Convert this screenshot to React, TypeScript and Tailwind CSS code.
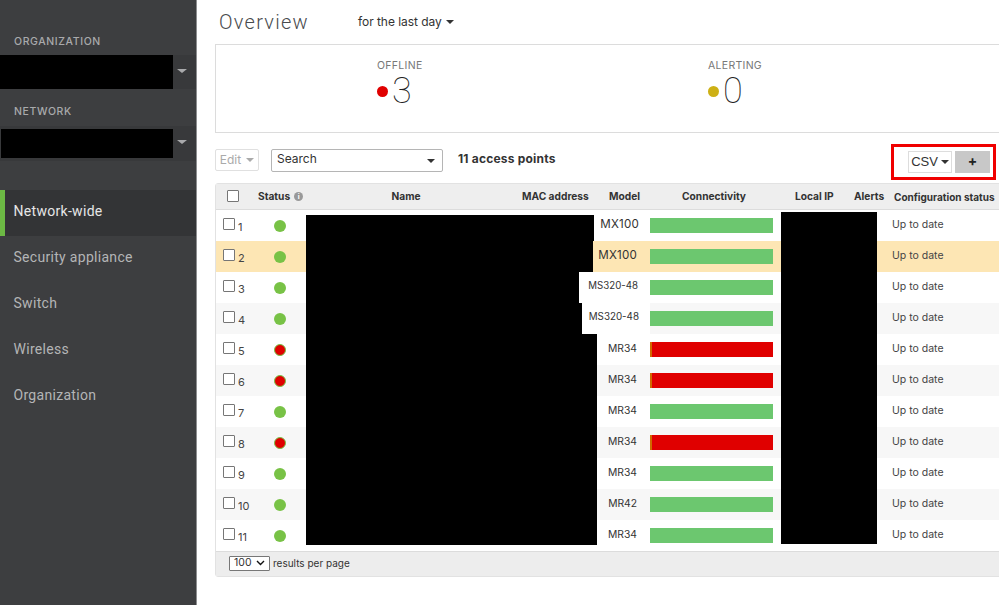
import React from "react";

const navItems = ["Network-wide", "Security appliance", "Switch", "Wireless", "Organization"];

const rows = [
  { n: 1, ok: true, model: "MX100", black: "w-[288px]", cell: "bg-white w-[56px] pr-[11px] text-[11.6px] tracking-[0.2px]" },
  { n: 2, ok: true, model: "MX100", black: "w-[287px]", cell: "bg-[#fde6b4] w-[57px] pr-[13px] text-[11.6px] tracking-[0.2px]" },
  { n: 3, ok: true, model: "MS320-48", black: "w-[273px]", cell: "bg-white w-[71px] pr-[12px] text-[9.7px]" },
  { n: 4, ok: true, model: "MS320-48", black: "w-[276px]", cell: "bg-white w-[68px] pr-[11px] text-[9.8px]" },
  { n: 5, ok: false, model: "MR34", black: "w-[291px]", cell: "bg-white w-[53px] pr-[13px] text-[10.3px]" },
  { n: 6, ok: false, model: "MR34", black: "w-[291px]", cell: "bg-[#f7f7f7] w-[53px] pr-[13px] text-[10.3px]" },
  { n: 7, ok: true, model: "MR34", black: "w-[291px]", cell: "bg-white w-[53px] pr-[13px] text-[10.3px]" },
  { n: 8, ok: false, model: "MR34", black: "w-[291px]", cell: "bg-[#f7f7f7] w-[53px] pr-[13px] text-[10.3px]" },
  { n: 9, ok: true, model: "MR34", black: "w-[291px]", cell: "bg-white w-[53px] pr-[13px] text-[10.3px]" },
  { n: 10, ok: true, model: "MR42", black: "w-[291px]", cell: "bg-[#f7f7f7] w-[53px] pr-[13px] text-[10.3px]" },
  { n: 11, ok: true, model: "MR34", black: "w-[291px]", cell: "bg-white w-[53px] pr-[13px] text-[10.3px]" },
];

function Caret({ className }: { className: string }) {
  return <span className={"inline-block w-0 h-0 border-x-[4px] border-x-transparent border-t-[4px] " + className} />;
}

function Sidebar() {
  return (
    <aside className="w-[197px] h-[605px] shrink-0 bg-[#3d3e40] border-r border-[#8d8e90] flex flex-col font-['Inter',sans-serif]">
      <div className="pt-[34px] pl-[14px] h-[55px] text-[10.5px] tracking-[0.6px] text-[#a9aaac] font-medium">ORGANIZATION</div>
      <div className="h-[34px] bg-[#38393b] flex items-center">
        <div className="w-[173px] h-[34px] bg-black" />
        <div className="flex-1 flex justify-center pb-[3px] pr-[5px]"><Caret className="border-t-[#a9aaac] border-x-[5px]" /></div>
      </div>
      <div className="pt-[15px] pl-[14px] h-[37px] text-[10.5px] tracking-[0.6px] text-[#a9aaac] font-medium">NETWORK</div>
      <div className="h-[35px] bg-[#38393b] flex items-center pl-[1px]">
        <div className="w-[172px] h-[29px] bg-black" />
        <div className="flex-1 flex justify-center pb-[3px] pr-[5px]"><Caret className="border-t-[#a9aaac] border-x-[5px]" /></div>
      </div>
      <nav className="mt-[29px] flex flex-col">
        {navItems.map((item, i) => (
          <div
            key={item}
            className={
              "h-[46px] flex items-center pb-[4px] text-[14px] tracking-[0.3px] font-['Roboto',sans-serif] " +
              (i === 0 ? "bg-[#333436] text-[#e6e6e6] border-l-[5px] border-[#6cb944] pl-[8.5px]" : "pl-[13.5px] text-[#b4b5b6]")
            }
          >
            {item}
          </div>
        ))}
      </nav>
    </aside>
  );
}

function Stat({ label, dot, value, width }: { label: string; dot: string; value: string; width: string }) {
  return (
    <div className={"flex flex-col " + width}>
      <div className="text-[10.5px] tracking-[0.3px] leading-[14px] text-[#777]">{label}</div>
      <div className="flex items-center h-[38px] mt-[-1px]">
        <span className={"w-[11px] h-[11px] rounded-full mt-[1px] " + dot} />
        <span className="ml-[4px] text-[36px] leading-[38px] font-thin text-[#222] font-['Roboto',sans-serif]">{value}</span>
      </div>
    </div>
  );
}

function Row({ r }: { r: (typeof rows)[number] }) {
  const bg = r.n === 2 ? "bg-[#fde6b4]" : r.n % 2 === 0 ? "bg-[#f7f7f7]" : "bg-white";
  return (
    <div className={"flex h-[31px] " + bg}>
      <div className="w-[34px] shrink-0 flex">
        <span className="ml-[7px] mt-[8px] w-[12px] h-[12px] border border-[#767676] bg-white rounded-[1px]" />
        <span className="ml-[3px] mt-[10px] text-[11px] leading-[14px] text-[#444]">{r.n}</span>
      </div>
      <div className="w-[56px] shrink-0 flex justify-center items-center pl-[4px]">
        <span className={"w-[12px] h-[12px] rounded-full " + (r.ok ? "bg-[#78c246]" : "bg-[#e00000] border border-[#78c246]")} />
      </div>
      <div className={"shrink-0 bg-black " + r.black + (r.n === 1 ? " mt-[5px]" : "") + (r.n === 11 ? " mb-[6px]" : "")} />
      <div className={"shrink-0 flex items-center justify-end pb-[2px] text-[#333] " + r.cell}>
        {r.model}
      </div>
      <div className="w-[123px] shrink-0 flex items-center">
        <div className={"w-full h-[15px] " + (r.ok ? "bg-[#6cc76f]" : "bg-[#e00000] border-l-[2px] border-[#d06a00]")} />
      </div>
      <div className="w-[8px] shrink-0" />
      <div className={"w-[96px] shrink-0 bg-black " + (r.n === 1 ? "mt-[2px]" : "") + (r.n === 11 ? " mb-[7px]" : "")} />
      <div className="w-[15px] shrink-0" />
      <div className="flex-1 text-[10.5px] text-[#444] flex items-center pb-[2px]">Up to date</div>
    </div>
  );
}

export default function App() {
  return (
    <div className="w-[999px] h-[605px] overflow-hidden flex bg-white font-['Inter',sans-serif]">
      <Sidebar />
      <main className="flex-1 min-w-0 pl-[18px]">
        <header className="h-[44px] flex items-center">
          <h1 className="ml-[4px] mt-[-1px] w-[139px] text-[20px] font-light tracking-[1.25px] text-[#484b4e] font-['Roboto',sans-serif]">Overview</h1>
          <span className="text-[12px] text-[#333] mt-[-1px] tracking-[-0.05px]">for the last day</span>
          <Caret className="ml-[4px] border-t-[#333]" />
        </header>

        <section className="w-[790px] h-[89px] border border-[#dcdcdc] flex pl-[161px] pt-[14px]">
          <Stat label="OFFLINE" dot="bg-[#e00000]" value="3" width="w-[331px]" />
          <Stat label="ALERTING" dot="bg-[#cdb015]" value="0" width="w-[100px]" />
        </section>

        <div className="h-[50px] flex items-start w-[784px]">
          <div className="mt-[16px] w-[44px] h-[22px] border border-[#e0e0e0] rounded-[2px] flex items-center justify-center gap-[5px] pb-[1px] text-[12px] text-[#aaa]">
            Edit <Caret className="border-t-[#aaa] mt-[1px]" />
          </div>
          <div className="mt-[16px] ml-[12px] w-[172px] h-[23px] border border-[#b5b5b5] rounded-[2px] flex items-center justify-between pl-[5px] pr-[7px] pb-[3px] text-[12px] text-[#333]">
            Search <Caret className="border-t-[#333] mt-[4px]" />
          </div>
          <div className="mt-[17px] ml-[15px] text-[12px] font-bold text-[#333] tracking-[0.2px]">11 access points</div>
          <div className="ml-auto mt-[11px] mr-[3px] w-[105px] h-[36px] border-[3px] border-[#f00000] flex items-center pl-[14px] gap-[3px]">
            <div className="w-[44px] h-[22px] border border-[#ddd] flex items-center justify-center gap-[3px] text-[13px] text-[#333] font-['Liberation_Sans',sans-serif]">
              CSV <Caret className="border-t-[#333]" />
            </div>
            <div className="w-[35px] h-[22px] bg-[#c8c8c8] flex items-center justify-center pb-[3px] text-[14px] font-bold text-[#222]">+</div>
          </div>
        </div>

        <section className="w-[790px] border border-[#e2e2e2] rounded-[3px]">
          <div className="h-[26px] pt-[1px] bg-[#eeeeee] border-b border-[#dcdcdc] flex items-center text-[10.2px] font-bold text-[#333]">
            <div className="w-[34px] shrink-0 pl-[11px] pb-[2px]"><div className="w-[12px] h-[12px] border border-[#767676] bg-white rounded-[1px]" /></div>
            <div className="w-[56px] shrink-0 pl-[8px] flex items-center gap-[4px]">
              Status
              <span className="w-[9px] h-[9px] rounded-full bg-[#999] text-white text-[7px] leading-[9px] text-center font-bold">i</span>
            </div>
            <div className="w-[200px] shrink-0 text-center">Name</div>
            <div className="w-[16px] shrink-0" />
            <div className="w-[87px] shrink-0 whitespace-nowrap">MAC address</div>
            <div className="w-[73px] shrink-0">Model</div>
            <div className="w-[113px] shrink-0 whitespace-nowrap">Connectivity</div>
            <div className="w-[59px] shrink-0 whitespace-nowrap">Local IP</div>
            <div className="w-[40px] shrink-0">Alerts</div>
            <div className="whitespace-nowrap text-[10px]">Configuration status</div>
          </div>
          {rows.map((r) => <Row key={r.n} r={r} />)}
          <div className="h-[25px] bg-[#ededed] border-t border-[#dcdcdc] flex items-center pl-[13px] pb-[2px] text-[#333]">
            <div className="w-[41px] h-[15px] border border-[#777] bg-white rounded-[1px] flex items-center justify-between px-[4px] text-[10.5px]">
              100
              <svg width="9" height="6" viewBox="0 0 9 6" fill="none"><path d="M1 1l3.5 3.5L8 1" stroke="#111" strokeWidth="1.4" /></svg>
            </div>
            <span className="ml-[3px] text-[10px]">results per page</span>
          </div>
        </section>
      </main>
    </div>
  );
}
